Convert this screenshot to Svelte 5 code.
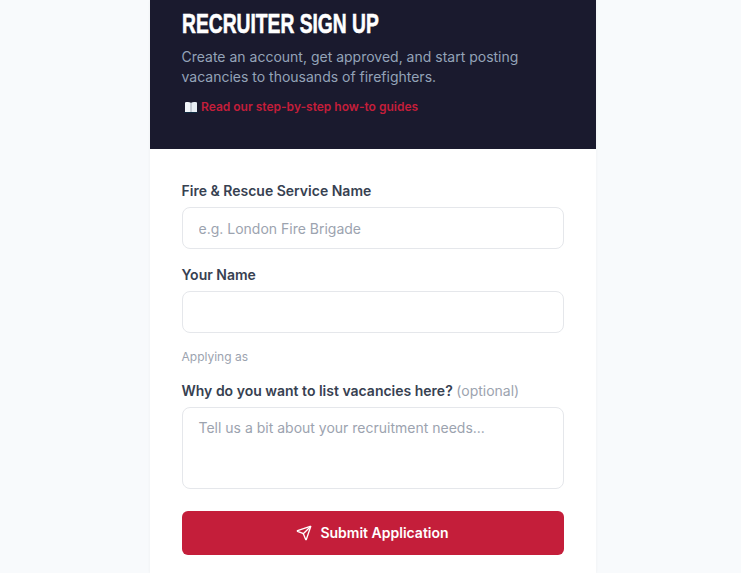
<script>
  const fields = [
    { label: 'Fire & Rescue Service Name', placeholder: 'e.g. London Fire Brigade' },
    { label: 'Your Name', placeholder: '' }
  ];
</script>

<div class="page">
  <main class="card">
    <header class="hero">
      <h1>RECRUITER SIGN UP</h1>
      <p>Create an account, get approved, and start posting vacancies to thousands of firefighters.</p>
      <a class="guide" href="#guides">
        <svg class="book" viewBox="0 0 14 12" width="14" height="12" aria-hidden="true">
          <path d="M1 1.500c2-.6 4.500-.6 5.800.3V11H1z" fill="#f1f5f9" />
          <path d="M13 1.500c-2-.6-4.500-.6-5.800.3V11H13z" fill="#e8eef4" />
          <path d="M0.500 11h13v1h-13z" fill="#0f2a40" />
          <path d="M6.600 2h.8v9h-.8z" fill="#cbd5e1" />
        </svg>
        <span>Read our step-by-step how-to guides</span>
      </a>
    </header>
    <form class="form">
      {#each fields as f}
        <div class="field">
          <label for={f.label}>{f.label}</label>
          <input id={f.label} placeholder={f.placeholder} />
        </div>
      {/each}
      <div class="hint">Applying as</div>
      <div class="field why">
        <label for="why">Why do you want to list vacancies here? <span class="opt">(optional)</span></label>
        <textarea id="why" placeholder="Tell us a bit about your recruitment needs..."></textarea>
      </div>
      <button type="button" class="submit">
        <svg viewBox="0 0 24 24" width="16" height="16" fill="none" stroke="currentColor" stroke-width="2" stroke-linecap="round" stroke-linejoin="round" aria-hidden="true">
          <path d="M14.536 21.686a.5.5 0 0 0 .937-.024l6.5-19a.496.496 0 0 0-.635-.635l-19 6.5a.5.5 0 0 0-.024.937l7.93 3.18a2 2 0 0 1 1.112 1.11z" />
          <path d="m21.854 2.147-10.94 10.939" />
        </svg>
        <span>Submit Application</span>
      </button>
    </form>
  </main>
</div>

<style>
  :global(body) {
    margin: 0;
    background: #f8fafc;
    font-family: Inter, "Liberation Sans", sans-serif;
  }
  .page {
    display: flex;
    justify-content: center;
    height: 573px;
    padding-left: 4px;
    overflow: hidden;
  }
  .card {
    width: 446px;
    height: 573px;
    background: #fff;
    box-shadow: 0 0 3px rgba(15, 23, 42, 0.05);
  }
  .hero {
    box-sizing: border-box;
    height: 149px;
    padding: 8px 32px 0;
    background: #1a1a2e;
  }
  h1 {
    margin: 0;
    color: #fff;
    font-family: "Liberation Sans", sans-serif;
    font-size: 27.5px;
    line-height: 32px;
    font-weight: 700;
    white-space: nowrap;
    -webkit-text-stroke: 0.6px #fff;
    transform: scaleX(0.7);
    transform-origin: left center;
  }
  .hero p {
    margin: 7px 0 0;
    width: 360px;
    color: #94a3b8;
    font-size: 14px;
    line-height: 20px;
  }
  .guide {
    display: flex;
    align-items: center;
    gap: 3.5px;
    margin-top: 12px;
    padding-left: 2px;
    color: #c41e3a;
    font-size: 12px;
    line-height: 16px;
    font-weight: 600;
    text-decoration: none;
  }
  .form {
    display: flex;
    flex-direction: column;
    padding: 32px 32px 0;
  }
  .field {
    display: flex;
    flex-direction: column;
    margin-bottom: 16px;
  }
  label {
    margin-bottom: 6px;
    color: #374151;
    font-size: 14px;
    line-height: 20px;
    font-weight: 600;
  }
  .opt {
    color: #9ca3af;
    font-weight: 400;
  }
  input, textarea {
    box-sizing: border-box;
    width: 100%;
    padding: 0 16px;
    border: 1px solid #e5e7eb;
    border-radius: 8px;
    background: #fff;
    color: #374151;
    font: 400 14px/20px Inter, "Liberation Sans", sans-serif;
    outline: none;
  }
  input { height: 42px; }
  textarea {
    display: block;
    height: 82px;
    padding-top: 10px;
    resize: none;
  }
  input::placeholder, textarea::placeholder {
    color: #9ca3af;
    opacity: 1;
  }
  .hint {
    margin: 0 0 16px;
    color: #9ca3af;
    font-size: 12px;
    line-height: 16px;
  }
  .why { margin-bottom: 22px; }
  .submit {
    display: flex;
    align-items: center;
    justify-content: center;
    gap: 8px;
    height: 44px;
    border: 0;
    border-radius: 6px;
    background: #c41e3a;
    color: #fff;
    font: 600 14px/20px Inter, "Liberation Sans", sans-serif;
  }
</style>
